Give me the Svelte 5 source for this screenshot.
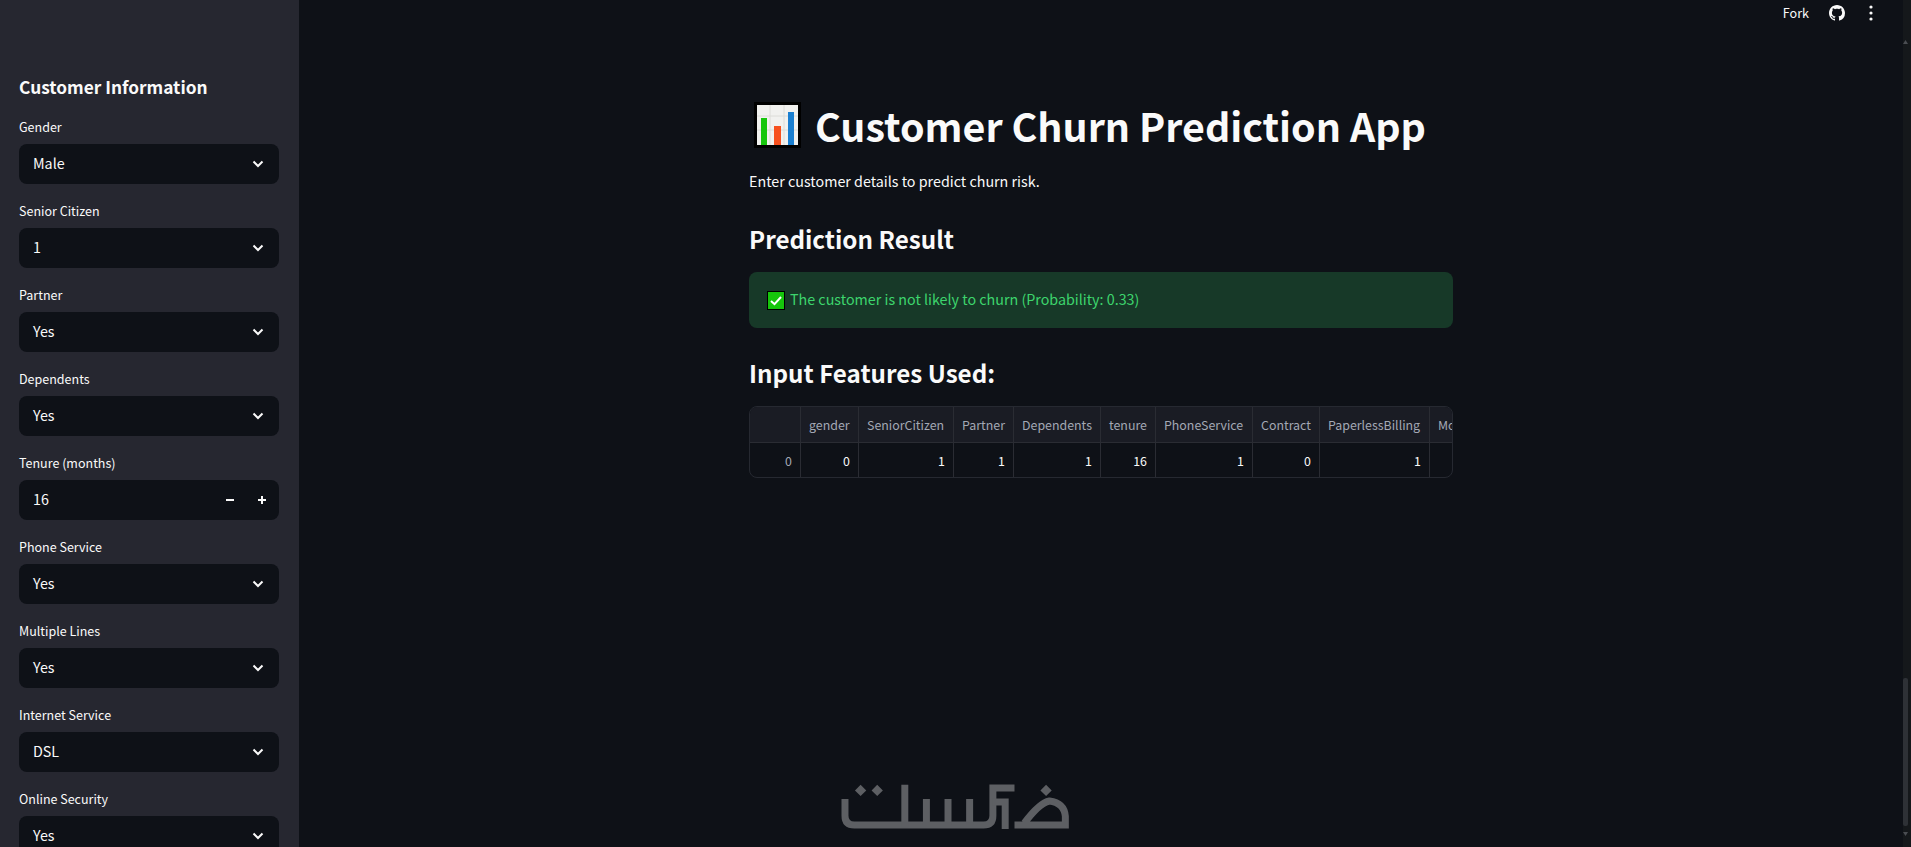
<script>
  const fields = [
    { label: 'Gender', value: 'Male' },
    { label: 'Senior Citizen', value: '1' },
    { label: 'Partner', value: 'Yes' },
    { label: 'Dependents', value: 'Yes' },
    { label: 'Tenure (months)', value: '16', number: true },
    { label: 'Phone Service', value: 'Yes' },
    { label: 'Multiple Lines', value: 'Yes' },
    { label: 'Internet Service', value: 'DSL' },
    { label: 'Online Security', value: 'Yes' }
  ];
  const columns = [
    { name: '', value: '0', width: 51, index: true },
    { name: 'gender', value: '0', width: 58 },
    { name: 'SeniorCitizen', value: '1', width: 95 },
    { name: 'Partner', value: '1', width: 60 },
    { name: 'Dependents', value: '1', width: 87 },
    { name: 'tenure', value: '16', width: 55 },
    { name: 'PhoneService', value: '1', width: 97 },
    { name: 'Contract', value: '0', width: 67 },
    { name: 'PaperlessBilling', value: '1', width: 110 },
    { name: 'Mo', value: '', width: 24 }
  ];
  const gridTemplate = columns.map((c) => c.width + 'px').join(' ');
</script>

<div class="page">
  <aside class="sidebar">
    <h2 class="side-title">Customer Information</h2>
    <div class="fields">
      {#each fields as f}
        <div class="field">
          <div class="label">{f.label}</div>
          <div class="control">
            <span class="value">{f.value}</span>
            {#if f.number}
              <span class="stepper">
                <svg width="10" height="10" viewBox="0 0 10 10"><rect x="1" y="4" width="8" height="2" fill="#fafafa" /></svg>
                <svg width="10" height="10" viewBox="0 0 10 10"><path d="M1 5h8M5 1v8" stroke="#fafafa" stroke-width="2" fill="none" /></svg>
              </span>
            {:else}
              <svg class="chev" width="12" height="8" viewBox="0 0 12 8"><path d="M1.5 1.5 6 6l4.5-4.5" stroke="#fafafa" stroke-width="2" fill="none" /></svg>
            {/if}
          </div>
        </div>
      {/each}
    </div>
  </aside>

  <main class="main">
    <header class="topbar">
      <span class="fork">Fork</span>
      <svg class="gh" width="16" height="16" viewBox="0 0 16 16"><path fill="#fafafa" d="M8 0C3.58 0 0 3.58 0 8c0 3.54 2.29 6.53 5.47 7.59.4.07.55-.17.55-.38 0-.19-.01-.82-.01-1.49-2.01.37-2.53-.49-2.69-.94-.09-.23-.48-.94-.82-1.13-.28-.15-.68-.52-.01-.53.63-.01 1.08.58 1.23.82.72 1.21 1.87.87 2.33.66.07-.52.28-.87.51-1.07-1.78-.2-3.64-.89-3.64-3.95 0-.87.31-1.59.82-2.15-.08-.2-.36-1.02.08-2.12 0 0 .67-.21 2.2.82.64-.18 1.32-.27 2-.27.68 0 1.36.09 2 .27 1.53-1.04 2.2-.82 2.2-.82.44 1.1.16 1.92.08 2.12.51.56.82 1.27.82 2.15 0 3.07-1.87 3.75-3.65 3.95.29.25.54.73.54 1.48 0 1.07-.01 1.93-.01 2.2 0 .21.15.46.55.38A8.013 8.013 0 0016 8c0-4.42-3.58-8-8-8z" /></svg>
      <svg class="kebab" width="6" height="16" viewBox="0 0 6 16"><circle cx="3" cy="2" r="1.6" fill="#fafafa" /><circle cx="3" cy="8" r="1.6" fill="#fafafa" /><circle cx="3" cy="14" r="1.6" fill="#fafafa" /></svg>
    </header>

    <section class="content">
      <h1 class="title">
        <svg class="chart" width="47" height="46" viewBox="0 0 47 46">
          <rect width="47" height="46" fill="#000" />
          <rect x="3" y="3" width="41" height="40" fill="#f1f1ef" />
          <path d="M3 14h41M3 28h41M16 3v40M30 3v40" stroke="#dcdcd8" stroke-width="1" />
          <rect x="7" y="16" width="6" height="27" fill="#16c60c" />
          <rect x="20" y="24" width="7" height="19" fill="#f7501e" />
          <rect x="34" y="10" width="6" height="33" fill="#1a7fd1" />
        </svg>
        <span>Customer Churn Prediction App</span>
      </h1>
      <p class="lead">Enter customer details to predict churn risk.</p>
      <h2 class="section first">Prediction Result</h2>
      <div class="alert">
        <svg width="18" height="19" viewBox="0 0 18 19">
          <rect width="18" height="19" fill="#000" />
          <rect x="1" y="1" width="16" height="17" fill="#16c60c" />
          <path d="M4 10l3.5 3.2L14 6" stroke="#fff" stroke-width="2" fill="none" />
        </svg>
        <span class="alert-text">The customer is not likely to churn (Probability: 0.33)</span>
      </div>
      <h2 class="section second">Input Features Used:</h2>
      <div class="table" style:grid-template-columns={gridTemplate}>
        {#each columns as c}
          <div class="th">{c.name}</div>
        {/each}
        {#each columns as c}
          <div class="td" class:index={c.index}>{c.value}</div>
        {/each}
      </div>
    </section>

    <svg class="watermark" width="230" height="46" viewBox="60 40 692 138" role="img" aria-label="logo">
      <g fill="none" stroke="#5d5f63" stroke-width="21">
        <path d="M75 88v50q0 28 28 28H492q28 0 28-28V55H585" />
        <path d="M255 45v130" />
        <path d="M320 88v78M385 88v78M450 88v78" />
        <path d="M520 97h37v81" />
        <path d="M585 166H738V140Q735 100 690 94Q660 100 615 160" />
      </g>
      <g fill="#5d5f63">
        <path d="M122 45l17 17-17 17-17-17zM172 45l17 17-17 17-17-17zM680 45l17 17-17 17-17-17z" />
      </g>
    </svg>
  </main>

  <div class="scrollbar">
    <svg class="arrow up" width="5" height="4" viewBox="0 0 5 4"><path d="M2.5 0 5 4H0z" fill="#4a4d52" /></svg>
    <div class="thumb"></div>
    <svg class="arrow down" width="5" height="4" viewBox="0 0 5 4"><path d="M0 0h5L2.5 4z" fill="#4a4d52" /></svg>
  </div>
</div>

<style>
  :global(body) {
    margin: 0;
    background: #0e1117;
    overflow: hidden;
  }
  .page {
    display: flex;
    width: 1911px;
    height: 847px;
    overflow: hidden;
    background: #0e1117;
    color: #fafafa;
    font-family: "Noto Sans CJK SC", "Noto Sans", sans-serif;
  }
  .sidebar {
    flex: 0 0 299px;
    box-sizing: border-box;
    padding: 72px 20px 0 19px;
    background: #262730;
    overflow: hidden;
  }
  .side-title {
    margin: 0 0 14px;
    font-size: 17.3px;
    font-weight: 600;
    line-height: 30px;
  }
  .fields {
    display: flex;
    flex-direction: column;
    gap: 16px;
  }
  .label {
    height: 28px;
    font-size: 12.5px;
    line-height: 22px;
  }
  .control {
    display: flex;
    align-items: center;
    justify-content: space-between;
    height: 40px;
    padding: 0 15px 0 14px;
    border-radius: 8px;
    background: #0e1117;
    font-size: 14.3px;
    line-height: 22px;
  }
  .value {
    margin-top: -2px;
  }
  .stepper {
    display: flex;
    gap: 22px;
    margin-right: -3px;
  }
  .stepper svg,
  .chev {
    display: block;
  }
  .main {
    position: relative;
    flex: 0 0 1604px;
    min-width: 0;
  }
  .topbar {
    display: flex;
    align-items: center;
    justify-content: flex-end;
    height: 26px;
    padding-right: 29px;
  }
  .fork {
    margin-right: 20px;
    font-size: 12.6px;
    line-height: 20px;
  }
  .kebab {
    margin-left: 23px;
  }
  .content {
    width: 704px;
    margin: 0 auto;
    padding-top: 72px;
  }
  .title {
    display: flex;
    align-items: center;
    gap: 14px;
    height: 54px;
    margin: 0;
    padding-left: 5px;
    font-size: 39.4px;
    font-weight: 700;
    line-height: 54px;
    white-space: nowrap;
  }
  .lead {
    margin: 17px 0 0;
    font-size: 14.3px;
    line-height: 24px;
  }
  .section {
    margin: 0;
    font-size: 24.2px;
    font-weight: 600;
    line-height: 36px;
  }
  .section.first {
    margin-top: 28px;
  }
  .section.second {
    margin-top: 27px;
  }
  .alert {
    display: flex;
    align-items: center;
    gap: 5px;
    height: 56px;
    margin-top: 15px;
    padding-left: 18px;
    border-radius: 8px;
    background: #173928;
    color: #3dd56d;
    font-size: 14.3px;
    line-height: 24px;
  }
  .alert-text {
    margin-top: -2px;
  }
  .table {
    display: grid;
    grid-template-rows: 36px 35px;
    margin-top: 15px;
    box-sizing: border-box;
    width: 704px;
    height: 72px;
    border: 1px solid #262931;
    border-radius: 8px;
    overflow: hidden;
    font-size: 12.4px;
    line-height: 20px;
  }
  .th,
  .td {
    box-sizing: border-box;
    display: flex;
    align-items: center;
    padding: 0 8px;
    border-right: 1px solid #2a2c33;
    overflow: hidden;
    white-space: nowrap;
  }
  .th {
    border-bottom: 1px solid #2a2c33;
    background: #1a1c24;
    color: #a3a8b4;
  }
  .td {
    justify-content: flex-end;
    color: #fafafa;
  }
  .td.index {
    color: #a3a8b4;
  }
  .watermark {
    position: absolute;
    left: 541px;
    top: 783px;
  }
  .scrollbar {
    display: flex;
    flex-direction: column;
    flex: 0 0 8px;
    box-sizing: border-box;
    padding: 40px 3px 0 0;
    background: #15181b;
  }
  .arrow {
    display: block;
    flex: none;
  }
  .thumb {
    flex: none;
    height: 148px;
    margin-top: 634px;
    border-radius: 2px;
    background: #2e3136;
  }
  .arrow.down {
    margin-top: 6px;
  }
</style>
